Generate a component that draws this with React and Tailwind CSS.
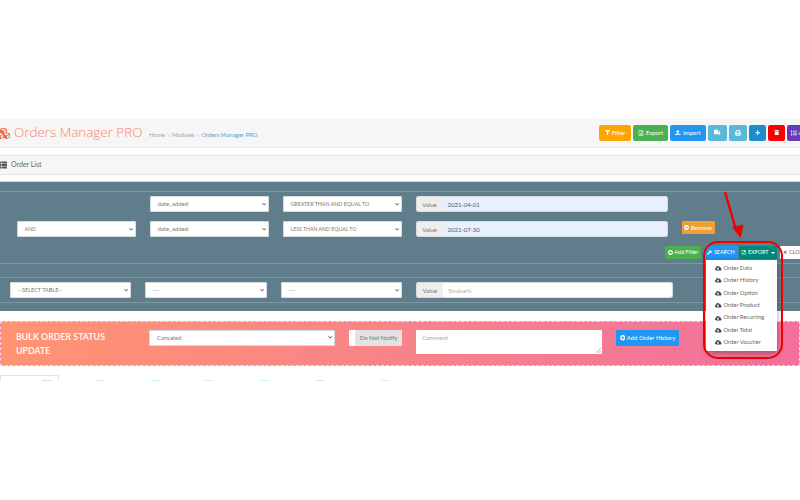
import React from "react";
import { FaFilter, FaRegFileExcel, FaUpload, FaTruck, FaPrint, FaPlus, FaTrash, FaList, FaCloudDownloadAlt, FaMinusCircle, FaPlusCircle, FaWrench, FaTimes, FaChevronDown, FaCubes, FaThList } from "react-icons/fa";

const font = { fontFamily: "Lato, 'Open Sans', sans-serif" };

function Select({ w, size = "text-[6px]", children }) {
  return (
    <div className={`${w} h-[16px] shrink-0 bg-white rounded-[1px] border border-[#d5dde0] flex items-center justify-between pl-[7px] pr-[2px] text-[#777]`}>
      <span className={`${size} leading-[14px] whitespace-nowrap`}>{children}</span>
      <FaChevronDown className="text-[4.5px] text-[#444]" />
    </div>
  );
}

function ValueInput({ w, value, filled, muted }) {
  return (
    <div className={`${w} h-[16px] shrink-0 flex rounded-[2px] border border-[#d5dde0] overflow-hidden text-[6px]`}>
      <div className="w-[26px] bg-[#eeeeee] text-[#777] flex items-center justify-center">Value</div>
      <div className={`flex-1 flex items-center pl-[5px] ${filled ? "bg-[#e8f0fe] text-[#555]" : "bg-white"} ${muted ? "text-[#aaa]" : ""}`}>{value}</div>
    </div>
  );
}

function TopBtn({ w, color, children }) {
  return (
    <div className={`${w} ${color} h-[16px] shrink-0 rounded-[2px] flex items-center justify-center gap-[2px] text-white text-[6px] whitespace-nowrap overflow-hidden`}>
      {children}
    </div>
  );
}

const Line = ({ className = "" }) => <div className={`h-px bg-[#7d96a2] ${className}`} />;

const items = ["Order Data", "Order History", "Order Option", "Order Product", "Order Recurring", "Order Total", "Order Voucher"];

export default function App() {
  return (
    <div style={font} className="relative w-[800px] h-[500px] overflow-hidden bg-white pt-[119px]">
      {/* page header */}
      <div className="h-[29px] bg-[#f6f6f6] border-b border-[#eeeeee] flex items-center">
        <FaCubes className="-ml-[3px] text-[13px] text-[#f4694c] shrink-0" />
        <span style={{ fontFamily: "'Open Sans', sans-serif" }} className="ml-[4px] w-[130px] shrink-0 text-[13.4px] font-light text-[#ff7f63] whitespace-nowrap leading-none">Orders Manager PRO</span>
        <div className="ml-[5px] mt-[2px] text-[6px] text-[#a5a5a5] whitespace-nowrap flex gap-[2.5px]">
          <span>Home</span><span>›</span><span>Modules</span><span>›</span><span className="text-[#5b9bd1]">Orders Manager PRO</span>
        </div>
        <div className="ml-auto flex gap-[2px] -mt-[1px] w-[201px] shrink-0">
          <TopBtn w="w-[32px]" color="bg-[#ffa500]"><FaFilter className="text-[5px]" />Filter</TopBtn>
          <TopBtn w="w-[35px]" color="bg-[#4caf50]"><FaRegFileExcel className="text-[6px]" />Export</TopBtn>
          <TopBtn w="w-[36px]" color="bg-[#2196f3]"><FaUpload className="text-[5.5px]" />Import</TopBtn>
          <TopBtn w="w-[19px]" color="bg-[#5bb8d8]"><FaTruck className="text-[6.5px]" /></TopBtn>
          <TopBtn w="w-[18px]" color="bg-[#5bb8d8]"><FaPrint className="text-[6px]" /></TopBtn>
          <TopBtn w="w-[17px]" color="bg-[#1b8fcb]"><FaPlus className="text-[5.5px]" /></TopBtn>
          <TopBtn w="w-[17px]" color="bg-[#ff0000]"><FaTrash className="text-[5.5px]" /></TopBtn>
          <div className="w-[20px] h-[16px] shrink-0 bg-[#673ab7] rounded-l-[2px] flex items-center pl-[4px] gap-[1.5px] text-white text-[6px] overflow-hidden"><FaList className="text-[6px] shrink-0" />A</div>
        </div>
      </div>

      {/* order list bar */}
      <div className="mt-[7px] h-[20px] bg-[#f6f6f6] border-y border-[#e4e4e4] flex items-center text-[7px] text-[#666]">
        <FaThList className="-ml-[1px] text-[8px] text-[#555]" />
        <span className="ml-[4px] -mt-[1px]">Order List</span>
      </div>

      {/* filter panel */}
      <div className="mt-[6px] h-[130px] bg-[#607d8b] border-t border-[#c9d3d8]">
        <Line className="mt-[9px]" />
        <div className="mt-[4px] flex gap-[13.5px] pl-[16.5px]">
          <div className="w-[119.5px] shrink-0" />
          <Select w="w-[119.5px]">date_added</Select>
          <Select w="w-[119.5px]" size="text-[5.3px]">GREATER THAN AND EQUAL TO</Select>
          <ValueInput w="w-[252px]" value="2021-04-01" filled />
        </div>
        <div className="mt-[9px] flex gap-[13.5px] pl-[16.5px]">
          <Select w="w-[119.5px]" size="text-[5.2px]">AND</Select>
          <Select w="w-[119.5px]">date_added</Select>
          <Select w="w-[119.5px]" size="text-[5.2px]">LESS THAN AND EQUAL TO</Select>
          <ValueInput w="w-[252px]" value="2021-07-30" filled />
          <div className="ml-[0.5px] w-[33px] h-[12.5px] bg-[#f0a030] rounded-[1px] flex items-center justify-center gap-[1.5px] text-white text-[6px] shrink-0">
            <FaMinusCircle className="text-[5px]" />Remove
          </div>
        </div>
        <div className="mt-[9px] h-[13px] pl-[665px] flex text-white text-[6px]">
          <div className="w-[36px] bg-[#4caf50] rounded-[1px] flex items-center justify-center gap-[1.5px] shrink-0 whitespace-nowrap text-[5.6px]"><FaPlusCircle className="text-[5px]" />Add Filter</div>
          <div className="ml-[3.5px] w-[33px] bg-[#2196f3] rounded-[1px] flex items-center justify-center gap-[1.5px] shrink-0 text-[5.4px]"><FaWrench className="text-[5px]" />SEARCH</div>
          <div className="ml-[1.5px] relative w-[38px] bg-[#00897b] rounded-[1px] flex items-center justify-center gap-[1.5px] shrink-0 text-[5.4px]">
            <FaRegFileExcel className="text-[5.5px]" />EXPORT
            <span className="w-0 h-0 border-x-[2px] border-x-transparent border-t-[2px] border-t-white ml-[1px]" />
            <div className="absolute z-10 left-[-33px] top-[13.5px] w-[71px] h-[91.5px] bg-white shadow-[0_2px_6px_rgba(0,0,0,0.35)] pt-[2.5px] text-[5.8px] text-[#666]">
              {items.map((t) => (
                <div key={t} className="h-[12.4px] flex items-center pl-[9px] gap-[2px] whitespace-nowrap">
                  <FaCloudDownloadAlt className="text-[6.5px] text-[#444] shrink-0" />{t}
                </div>
              ))}
            </div>
          </div>
          <div className="ml-[3px] w-[24px] bg-white rounded-[1px] flex items-center gap-[1.5px] pl-[3px] text-[#666] shrink-0 whitespace-nowrap overflow-hidden text-[5.4px]"><FaTimes className="text-[4.5px] shrink-0" />CLOSE</div>
        </div>
        <Line className="mt-[4px]" />
        <Line className="mt-[13px]" />
        <div className="mt-[4px] flex pl-[10px]">
          <Select w="w-[121px]" size="text-[5.5px]">--SELECT TABLE--</Select>
          <div className="w-[14px] shrink-0" />
          <Select w="w-[122px]">---</Select>
          <div className="w-[13.5px] shrink-0" />
          <Select w="w-[121.5px]">---</Select>
          <div className="w-[14px] shrink-0" />
          <ValueInput w="w-[257px]" value="%value%" muted />
        </div>
        <Line className="mt-[4px]" />
      </div>

      {/* bulk update */}
      <div className="mt-[9.5px] h-[45.5px] bg-gradient-to-r from-[#ff9472] to-[#f2709c] border border-dashed border-[#ffd9cf] flex items-start pt-[8px] pl-[15px]">
        <div className="w-[133px] shrink-0 text-[8.8px] leading-[14px] font-bold text-[#fff3ea]">BULK ORDER STATUS<br />UPDATE</div>
        <Select w="w-[186px]">Canceled</Select>
        <div className="ml-[14px] w-[53px] h-[16px] shrink-0 flex bg-white rounded-[1px] overflow-hidden text-[6px]">
          <div className="w-[6px]" />
          <div className="flex-1 bg-[#e2e2e2] text-[#777] flex items-center justify-center whitespace-nowrap">Do Not Notify</div>
        </div>
        <div className="ml-[14px] w-[186px] h-[24px] shrink-0 bg-white rounded-[1px] pl-[6px] pt-[3px] text-[6px] text-[#aaa] relative">
          Comment
          <svg className="absolute right-[1px] bottom-[1px]" width="5" height="5" viewBox="0 0 5 5"><path d="M0 5 5 0M2.5 5 5 2.5" stroke="#888" strokeWidth=".6" /></svg>
        </div>
        <div className="ml-[14px] w-[63px] h-[16.5px] shrink-0 bg-[#2196f3] rounded-[1px] text-white text-[6px] flex items-center justify-center gap-[1.5px] whitespace-nowrap">
          <FaPlusCircle className="text-[5.5px]" />Add Order History
        </div>
      </div>

      {/* tab row, cut off by the crop */}
      <div className="mt-[9px] h-[6px] flex items-end">
        <div className="w-[59px] h-[6px] border-x border-t border-[#e3e6e6] pl-[41px] flex items-end shrink-0">
          <div className="w-[10px] h-[1px] bg-[#bfe6f5]" />
        </div>
        <div className="ml-[38px] w-[7px] h-[1px] bg-[#c5ecf3]" />
        <div className="ml-[48px] w-[8px] h-[1px] bg-[#c5ecf3]" />
        <div className="ml-[45px] w-[8px] h-[1px] bg-[#c5ecf3]" />
        <div className="ml-[48px] w-[8px] h-[1px] bg-[#c5ecf3]" />
        <div className="ml-[47px] w-[8px] h-[1px] bg-[#c5ecf3]" />
        <div className="ml-[57px] w-[7px] h-[1px] bg-[#fbe3b0]" />
      </div>

      {/* red annotation drawn over the screenshot */}
      <svg className="absolute left-[720px] top-[188px] z-20" width="30" height="54" viewBox="0 0 30 54">
        <path d="M5 4 15.5 40" stroke="#f00000" strokeWidth="2.4" fill="none" />
        <path d="M12 39 23.5 36.5 20.5 50Z" fill="#f00000" />
      </svg>
      <div className="absolute z-20 left-[703px] top-[240.5px] w-[80px] h-[118px] rounded-[15px] border-[2.5px] border-[#ee0000]" />
    </div>
  );
}
